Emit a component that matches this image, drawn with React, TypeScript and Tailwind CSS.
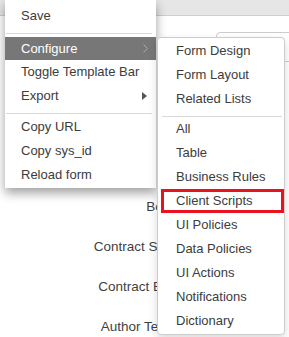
import React from "react";

const mainTop = ["Save"];
const subA = ["Form Design", "Form Layout", "Related Lists"];
const subB = [
  "All",
  "Table",
  "Business Rules",
  "Client Scripts",
  "UI Policies",
  "Data Policies",
  "UI Actions",
  "Notifications",
  "Dictionary",
];

// rows of the form behind the menus; the upper labels sit fully under the menus
const formRows = [
  { id: 1, label: "", input: true },
  { id: 2, label: "", input: false },
  { id: 3, label: "", input: false },
  { id: 4, label: "", input: false },
  { id: 5, label: "Body", input: false },
  { id: 6, label: "Contract Start", input: false },
  { id: 7, label: "Contract End", input: false },
  { id: 8, label: "Author Team", input: false },
];

const MenuItem: React.FC<{ text: string }> = ({ text }) => (
  <div className="h-6 flex items-center pl-4 text-[13px] text-[#3c3c3c]">{text}</div>
);

const App: React.FC = () => {
  return (
    <div
      className="relative w-[289px] h-[337px] overflow-hidden bg-white"
      style={{ fontFamily: '"Liberation Sans", Arial, sans-serif' }}
    >
      {/* page behind the menus */}
      <div className="h-[16px] bg-[#e6e6e6] border-b border-[#cfcfcf]" />
      <div className="mt-[11px] flex flex-col">
        {formRows.map((r) => (
          <div key={r.id} className="h-10 flex items-center">
            <div className="w-[181px] shrink-0 text-right text-[13.5px] text-[#3f3f3f] pr-1">
              {r.label}
            </div>
            {r.input && (
              <div className="ml-[35px] w-[200px] h-[30px] shrink-0 border border-[#cccccc] rounded-[4px]" />
            )}
          </div>
        ))}
      </div>

      {/* main context menu */}
      <div className="absolute left-[5px] top-0 w-[151px] bg-white pt-1 pb-px shadow-[0_5px_10px_rgba(0,0,0,0.38)] z-10">
        {mainTop.map((t) => (
          <MenuItem key={t} text={t} />
        ))}
        <div className="mt-[5px] mb-[3px] ml-px mr-1 h-px bg-[#dadada]" />
        <div className="relative h-[23px] flex items-center pl-4 bg-[#777777] text-[13px] text-white">
          Configure
          <svg className="absolute left-[138px] top-[7px]" width="5" height="9" viewBox="0 0 5 9">
            <polyline points="0.5,0.5 4.5,4.5 0.5,8.5" fill="none" stroke="#a8a8a8" strokeWidth="1" />
          </svg>
        </div>
        <MenuItem text="Toggle Template Bar" />
        <div className="relative">
          <MenuItem text="Export" />
          <svg className="absolute left-[137px] top-[8px]" width="5" height="8" viewBox="0 0 5 8">
            <polygon points="0,0 5,4 0,8" fill="#555555" />
          </svg>
        </div>
        <div className="mt-[5px] mb-px ml-px mr-1 h-px bg-[#dadada]" />
        <MenuItem text="Copy URL" />
        <MenuItem text="Copy sys_id" />
        <MenuItem text="Reload form" />
      </div>

      {/* Configure submenu */}
      <div className="absolute left-[157px] top-[37px] w-[128px] bg-white border border-[#cccccc] rounded-[4px] pt-px pb-px shadow-[0_4px_10px_rgba(0,0,0,0.15)] z-20">
        {subA.map((t) => (
          <div key={t} className="h-6 flex items-center pl-[18px] text-[13px] text-[#3c3c3c]">
            {t}
          </div>
        ))}
        <div className="mt-[5px] ml-[4px] mr-[2px] h-px bg-[#dadada]" />
        {subB.map((t) =>
          t === "Client Scripts" ? (
            <div
              key={t}
              className="h-6 ml-[3px] flex items-center pl-[12px] border-[3px] border-[#e8131f] text-[13px] text-[#3c3c3c]"
            >
              {t}
            </div>
          ) : (
            <div key={t} className="h-6 flex items-center pl-[18px] text-[13px] text-[#3c3c3c]">
              {t}
            </div>
          )
        )}
      </div>
    </div>
  );
};

export default App;
